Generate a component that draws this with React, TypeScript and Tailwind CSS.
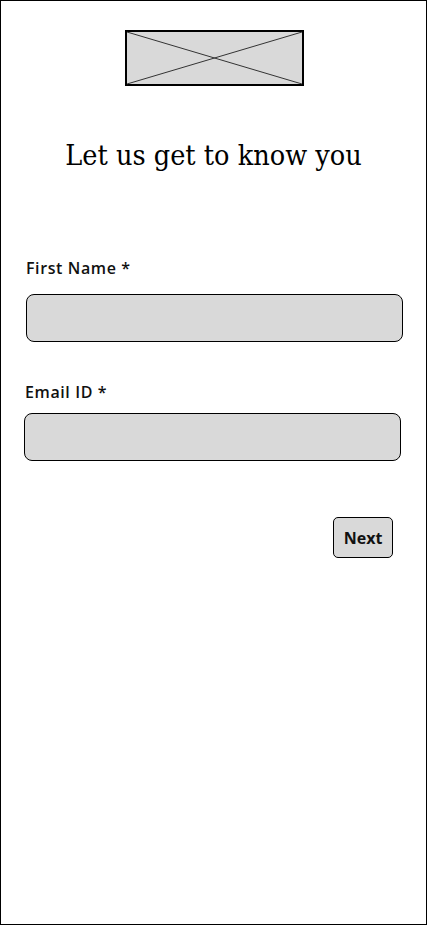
import React from "react";

export default function App() {
  return (
    <div className="w-[427px] h-[925px] border border-black bg-white flex flex-col" style={{ fontFamily: "'Liberation Sans', sans-serif" }}>
      <div className="flex pl-[124px] pt-[29px]">
        <svg width="179" height="56" viewBox="0 0 179 56" className="block">
          <rect x="1" y="1" width="177" height="54" fill="#d9d9d9" stroke="#000" strokeWidth="2" />
          <line x1="2" y1="2" x2="177" y2="54" stroke="#333" strokeWidth="1" />
          <line x1="177" y1="2" x2="2" y2="54" stroke="#333" strokeWidth="1" />
        </svg>
      </div>
      <h1 className="text-center mt-[52px] text-[28.5px] leading-[36px] text-black font-stretch-condensed" style={{ fontFamily: "'DejaVu Serif', 'Liberation Serif', serif" }}>
        Let us get to know you
      </h1>
      <div className="flex flex-col pl-[24px] pr-[24px] mt-[84px]">
        <label className="text-[16px] font-semibold leading-[20px] tracking-[0.6px] text-[#111] ml-[1px]" style={{ fontFamily: "'Open Sans', sans-serif" }}>First Name *</label>
        <div className="mt-[16px] ml-[1px] w-[377px] h-[48px] rounded-[8px] border border-black bg-[#d9d9d9]" />
        <label className="mt-[40px] text-[16px] font-semibold leading-[20px] tracking-[0.6px] text-[#111]" style={{ fontFamily: "'Open Sans', sans-serif" }}>Email ID *</label>
        <div className="mt-[11px] -ml-[1px] w-[377px] h-[48px] rounded-[8px] border border-black bg-[#d9d9d9]" />
        <div className="flex justify-end mt-[56px] pr-[9px]">
          <button className="w-[60px] h-[41px] rounded-[5px] border border-black bg-[#d9d9d9] text-[16px] font-bold text-[#111]" style={{ fontFamily: "'Open Sans', sans-serif" }}>Next</button>
        </div>
      </div>
    </div>
  );
}
